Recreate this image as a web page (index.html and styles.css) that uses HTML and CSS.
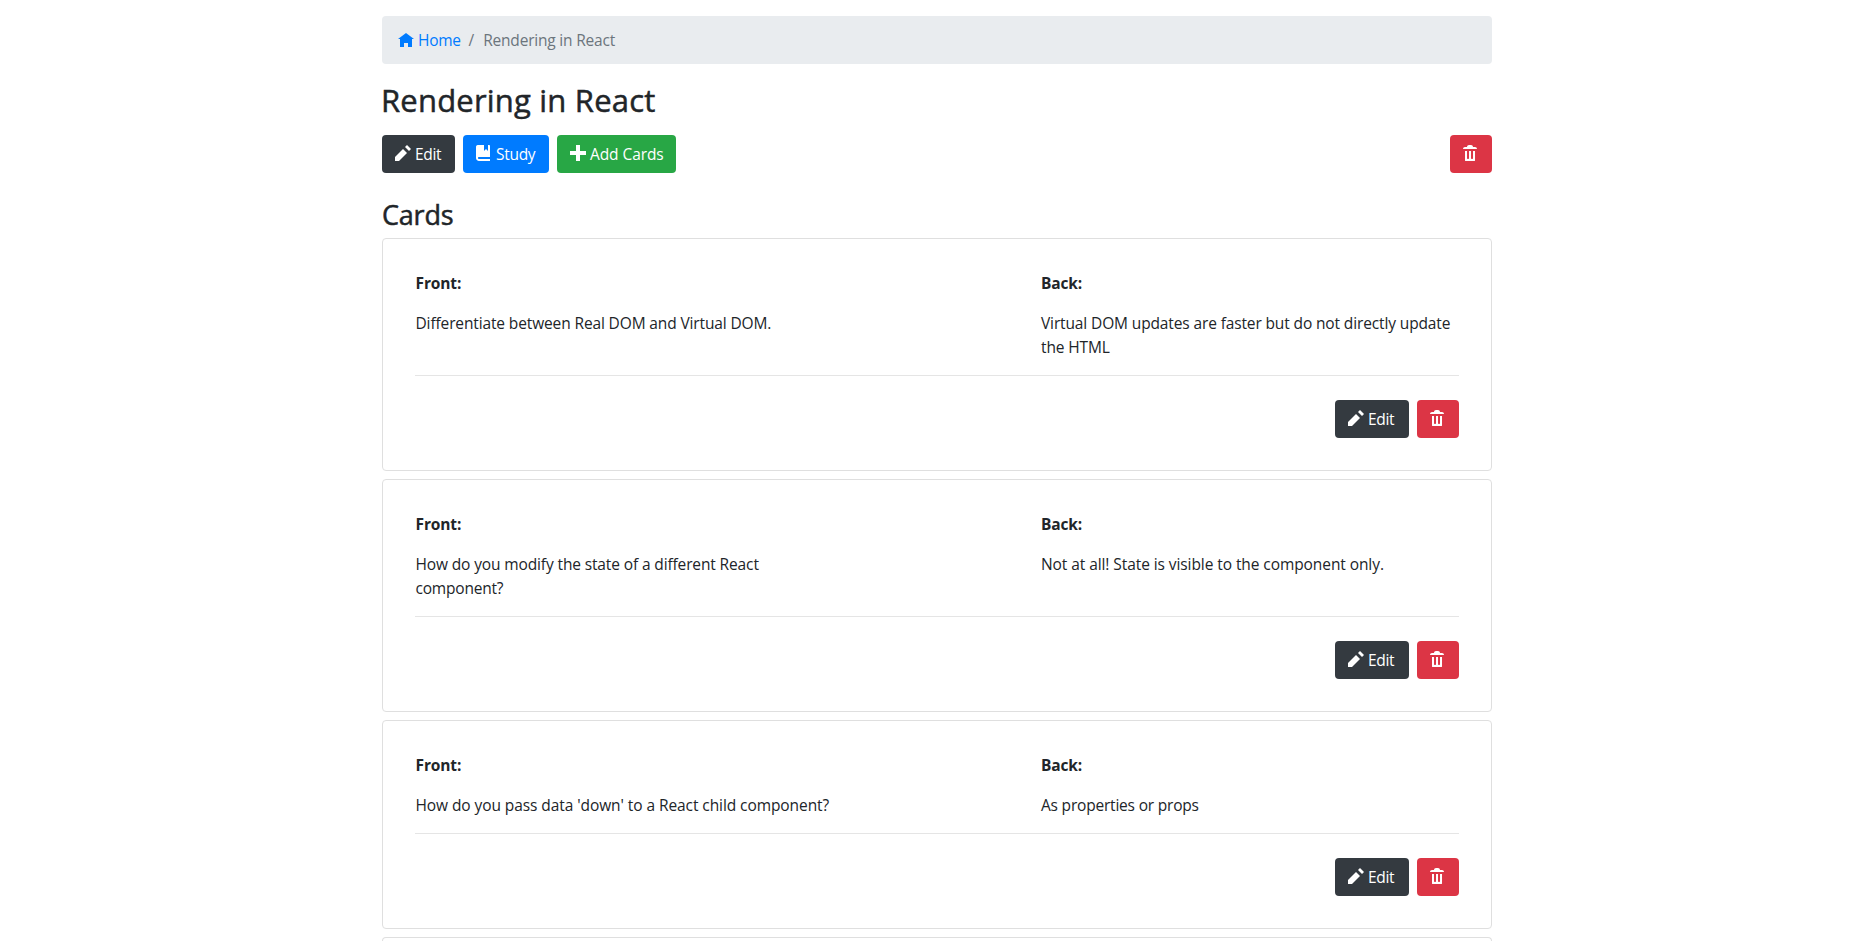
FILE: index.html
```html
<!DOCTYPE html>
<html lang="en">
<head>
<meta charset="utf-8">
<title>Rendering in React</title>
<link rel="stylesheet" href="styles.css">
</head>
<body>
<svg class="sprite" aria-hidden="true">
  <symbol id="home" viewBox="0 0 8 8"><path d="M4 0l-4 3h1v4h2v-2h2v2h2v-4.03l1 .03-4-3z"/></symbol>
  <symbol id="pencil" viewBox="0 0 8 8"><path d="M6 0l-1 1 2 2 1-1-2-2zm-2 2l-4 4v2h2l4-4-2-2z"/></symbol>
  <symbol id="book" viewBox="0 0 8 8"><path d="M1 0c-.07 0-.13.01-.19.03-.39.08-.7.39-.78.78-.03.06-.03.12-.03.19v5.5c0 .83.67 1.5 1.5 1.5h5.5v-1h-5.5c-.28 0-.5-.22-.5-.5s.22-.5.5-.5h5.5v-5.5c0-.28-.22-.5-.5-.5h-.5v3l-1-1-1 1v-3h-3z"/></symbol>
  <symbol id="plus" viewBox="0 0 8 8"><path d="M3 0v3h-3v2h3v3h2v-3h3v-2h-3v-3h-2z"/></symbol>
  <symbol id="trash" viewBox="0 0 8 8"><path d="M3 0c-.55 0-1 .45-1 1h-1c-.55 0-1 .45-1 1h7c0-.55-.45-1-1-1h-1c0-.55-.45-1-1-1h-1zm-2 3v4.81c0 .11.08.19.19.19h4.63c.11 0 .19-.08.19-.19v-4.81h-1v3.5c0 .28-.22.5-.5.5s-.5-.22-.5-.5v-3.5h-1v3.5c0 .28-.22.5-.5.5s-.5-.22-.5-.5v-3.5h-1z"/></symbol>
</svg>
<main class="container">
  <nav class="breadcrumb">
    <a class="crumb-link" href="#"><svg class="icon"><use href="#home"/></svg>Home</a>
    <span class="crumb-sep">/</span>
    <span class="crumb-current">Rendering in React</span>
  </nav>
  <h2 class="title">Rendering in React</h2>
  <div class="toolbar">
    <button class="btn btn-dark btn-edit"><svg class="icon"><use href="#pencil"/></svg>Edit</button>
    <button class="btn btn-primary"><svg class="icon"><use href="#book"/></svg>Study</button>
    <button class="btn btn-success"><svg class="icon"><use href="#plus"/></svg>Add Cards</button>
    <button class="btn btn-danger push" aria-label="Delete deck"><svg class="icon"><use href="#trash"/></svg></button>
  </div>
  <h3 class="subtitle">Cards</h3>
  <section class="cards">
    <article class="card">
      <div class="sides">
        <div class="side front"><b class="label">Front:</b><p class="text">Differentiate between Real DOM and Virtual DOM.</p></div>
        <div class="side"><b class="label">Back:</b><p class="text">Virtual DOM updates are faster but do not directly update<br>the HTML</p></div>
      </div>
      <div class="actions">
        <button class="btn btn-dark"><svg class="icon"><use href="#pencil"/></svg>Edit</button>
        <button class="btn btn-danger" aria-label="Delete card"><svg class="icon"><use href="#trash"/></svg></button>
      </div>
    </article>
    <article class="card">
      <div class="sides">
        <div class="side front"><b class="label">Front:</b><p class="text">How do you modify the state of a different React<br><span class="snug">component?</span></p></div>
        <div class="side"><b class="label">Back:</b><p class="text loose">Not at all! State is visible to the component only.</p></div>
      </div>
      <div class="actions">
        <button class="btn btn-dark"><svg class="icon"><use href="#pencil"/></svg>Edit</button>
        <button class="btn btn-danger" aria-label="Delete card"><svg class="icon"><use href="#trash"/></svg></button>
      </div>
    </article>
    <article class="card">
      <div class="sides">
        <div class="side front"><b class="label">Front:</b><p class="text loose">How do you pass data 'down' to a React child component?</p></div>
        <div class="side"><b class="label">Back:</b><p class="text snug">As properties or props</p></div>
      </div>
      <div class="actions">
        <button class="btn btn-dark"><svg class="icon"><use href="#pencil"/></svg>Edit</button>
        <button class="btn btn-danger" aria-label="Delete card"><svg class="icon"><use href="#trash"/></svg></button>
      </div>
    </article>
    <article class="card"></article>
  </section>
</main>
</body>
</html>
```

FILE: styles.css
```css
*, *::before, *::after { box-sizing: border-box; }

html { overflow: hidden; }

body {
  margin: 0;
  height: 941px;
  overflow: hidden;
  background: #fff;
  color: #212529;
  font: 400 15.5px/24px "Segoe UI", "Open Sans", "Noto Sans", sans-serif;
  letter-spacing: -0.13px;
}

.sprite { display: none; }

.icon {
  flex: none;
  width: 16px;
  height: 16px;
  fill: currentColor;
}

.container {
  width: 1110px;
  margin: 0 0 0 382px;
  padding-top: 16px;
}

.breadcrumb {
  display: flex;
  height: 48px;
  padding: 12px 16px;
  border-radius: 4px;
  background: #e9ecef;
  color: #6c757d;
}

.crumb-link {
  display: flex;
  gap: 4px;
  color: #007bff;
  text-decoration: none;
  letter-spacing: -0.3px;
}

.crumb-link .icon { margin-top: 5px; }
.crumb-sep { padding: 0 9px 0 8px; }
.crumb-current { letter-spacing: -0.2px; }

.title {
  margin: 17px 0 7px;
  font-size: 31px;
  font-weight: 500;
  line-height: 39px;
  letter-spacing: 0.2px;
  text-indent: -1px;
  -webkit-text-stroke: 0.5px currentColor;
}

.toolbar {
  display: flex;
  gap: 8px;
  padding-top: 8px;
}

.push { margin-left: auto; }

.btn {
  display: flex;
  gap: 4px;
  height: 38px;
  padding: 6px 12px;
  border: 0 solid transparent;
  border-width: 1px 0 1px 1px;
  border-radius: 4px;
  color: #fff;
  font: inherit;
  letter-spacing: -0.3px;
  white-space: nowrap;
}

.btn .icon { margin-top: 3px; }

.btn-dark { width: 74px; background-color: #343a40; }
.btn-edit { width: 73px; }
.btn-primary { width: 86px; background-color: #007bff; }
.btn-success { width: 119px; background-color: #28a745; letter-spacing: -0.08px; }
.btn-danger { width: 42px; background-color: #dc3545; }

.subtitle {
  margin: 25px 0 7px;
  font-size: 27px;
  font-weight: 500;
  line-height: 33px;
  letter-spacing: -0.2px;
  -webkit-text-stroke: 0.5px currentColor;
}

.cards {
  display: flex;
  flex-direction: column;
  gap: 8px;
}

.card {
  padding: 32px;
  border: 1px solid #dfdfdf;
  border-radius: 4px;
}

.card:last-child {
  height: 4px;
  padding: 0;
  border-bottom: 0;
  border-radius: 4px 4px 0 0;
}

.sides {
  display: flex;
  padding-bottom: 16px;
  border-bottom: 1px solid #e5e5e5;
}

.front { width: 626px; }

.label {
  display: block;
  margin-bottom: 16px;
  font-weight: 700;
}

.front > * { padding-left: 0.5px; }

.text { margin: 0; }
.loose { letter-spacing: -0.08px; }
.snug { letter-spacing: -0.2px; }

.actions {
  display: flex;
  justify-content: flex-end;
  gap: 8px;
  padding-top: 24px;
}
```
